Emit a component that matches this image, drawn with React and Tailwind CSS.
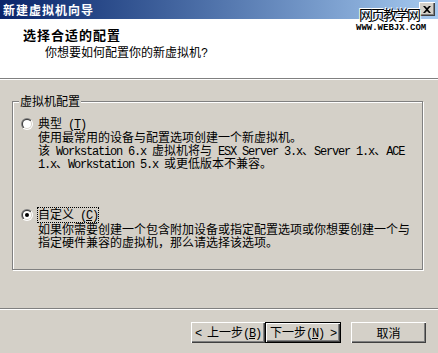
import React from 'react';

// Latin runs use a half-width mono so they sit like SimSun text
const Mono = ({ children }) => (
  <span className="font-['Liberation_Mono',monospace] tracking-[-1.2px]">{children}</span>
);

const Radio = ({ checked, id }) => (
  <svg width="12" height="12" viewBox="0 0 12 12" className="shrink-0">
    <defs>
      <linearGradient id={`outer-${id}`} x1="0" y1="0" x2="1" y2="1">
        <stop offset="0.5" stopColor="#808080" />
        <stop offset="0.5" stopColor="#ffffff" />
      </linearGradient>
      <linearGradient id={`inner-${id}`} x1="0" y1="0" x2="1" y2="1">
        <stop offset="0.5" stopColor="#404040" />
        <stop offset="0.5" stopColor="#d4d0c8" />
      </linearGradient>
    </defs>
    <circle cx="6" cy="6" r="6" fill={`url(#outer-${id})`} />
    <circle cx="6" cy="6" r="5" fill={`url(#inner-${id})`} />
    <circle cx="6" cy="6" r="4" fill="#ffffff" />
    {checked && <circle cx="6" cy="6" r="2" fill="#000000" />}
  </svg>
);

const WinButton = ({ children, isDefault, className = '' }) => (
  <button
    className={
      isDefault
        ? `h-[21px] border border-black bg-[#d4d0c8] shadow-[inset_1px_1px_0_#fff,inset_-1px_-1px_0_#404040,inset_-2px_-2px_0_#808080] text-[12px] leading-none flex items-center justify-center ${className}`
        : `h-[21px] bg-[#d4d0c8] shadow-[inset_1px_1px_0_#fff,inset_-1px_-1px_0_#404040,inset_-2px_-2px_0_#808080] text-[12px] leading-none flex items-center justify-center ${className}`
    }
  >
    <span className="whitespace-pre">{children}</span>
  </button>
);

const App = () => {
  return (
    <div className="relative w-[438px] h-[353px] overflow-hidden bg-[#d4d0c8] flex flex-col text-black text-[12px] font-['Noto_Sans_CJK_SC','Noto_Sans',sans-serif]">
      {/* Title bar */}
      <div className="h-[19px] shrink-0 flex justify-between bg-linear-to-r from-[#0a246a] to-[#a6caf0] pl-[3px] pr-[3px]">
        <span className="text-white font-bold text-[12px] leading-[19px] tracking-[1px]">新建虚拟机向导</span>
        <div className="mt-[2px] w-[16px] h-[14px] bg-[#d4d0c8] shadow-[inset_1px_1px_0_#fff,inset_-1px_-1px_0_#404040,inset_-2px_-2px_0_#808080] flex items-center justify-center">
          <svg width="8" height="7" viewBox="0 0 8 7">
            <path d="M0 0h2l2 2 2-2h2L5 3.5 8 7H6L4 5 2 7H0l3-3.5z" fill="#000" />
          </svg>
        </div>
      </div>

      {/* Header */}
      <div className="h-[59px] shrink-0 bg-white pl-[23px] pt-[9px]">
        <div className="h-[14px] font-bold text-[13px] leading-[14px] tracking-[1px]">选择合适的配置</div>
        <div className="h-[14px] mt-[3px] pl-[22px] leading-[14px]">
          你想要如何配置你的新虚拟机<Mono>?</Mono>
        </div>
      </div>
      <div className="h-px shrink-0 bg-[#808080]" />
      <div className="h-px shrink-0 bg-white" />

      {/* Group box */}
      <div className="pt-[21px] pl-[12px]">
        <div className="relative w-[411px] h-[169px] border border-[#808080] shadow-[1px_1px_0_#fff,inset_1px_1px_0_#fff] pl-[8px] pt-[15px]">
          <span className="absolute left-[6px] -top-[8px] bg-[#d4d0c8] px-[1px] leading-[14px]">虚拟机配置</span>

          <div className="flex items-center h-[13px] gap-[5px]">
            <Radio id="typical" />
            <span className="leading-[13px] whitespace-nowrap">
              典型<Mono> (<u>T</u>)</Mono>
            </span>
          </div>
          <div className="pl-[17px] leading-[13px] whitespace-nowrap">
            <div className="h-[13px]">使用最常用的设备与配置选项创建一个新虚拟机。</div>
            <div className="h-[13px]">
              该<Mono> Workstation 6.x </Mono>虚拟机将与<Mono> ESX Server 3.x</Mono>、<Mono>Server 1.x</Mono>、<Mono>ACE</Mono>
            </div>
            <div className="h-[13px]">
              <Mono>1.x</Mono>、<Mono>Workstation 5.x </Mono>或更低版本不兼容。
            </div>
          </div>

          <div className="mt-[39px] flex items-center h-[13px] gap-[4px]">
            <Radio id="custom" checked />
            <span className="leading-[12px] whitespace-nowrap border border-dotted border-black">
              自定义<Mono> (<u>C</u>)</Mono>
            </span>
          </div>
          <div className="mt-[1px] pl-[17px] leading-[13px] whitespace-nowrap">
            <div className="h-[13px]">如果你需要创建一个包含附加设备或指定配置选项或你想要创建一个与</div>
            <div className="h-[13px]">指定硬件兼容的虚拟机，那么请选择该选项。</div>
          </div>
        </div>
      </div>

      {/* Footer */}
      <div className="mt-[38px] h-px shrink-0 bg-[#808080]" />
      <div className="h-px shrink-0 bg-white" />
      <div className="mt-[12px] flex justify-end pr-[12px]">
        <WinButton className="w-[74px]">
          <Mono>&lt; </Mono>上一步<Mono>(<u>B</u>)</Mono>
        </WinButton>
        <WinButton isDefault className="w-[76px]">
          下一步<Mono>(<u>N</u>) &gt;</Mono>
        </WinButton>
        <WinButton className="w-[75px] ml-[10px]">取消</WinButton>
      </div>

      {/* Watermark */}
      <div className="absolute left-[359px] top-[7px] text-[14px] leading-[15px] tracking-[-2px] text-black [text-shadow:1px_1px_0_#fff,-1px_-1px_0_#fff]">
        网页教学网
      </div>
      <div className="absolute left-[356px] top-[24px] text-[9px] leading-[9px] font-bold font-['Liberation_Mono',monospace] text-black">
        WWW.WEBJX.COM
      </div>
    </div>
  );
};

export default App;
